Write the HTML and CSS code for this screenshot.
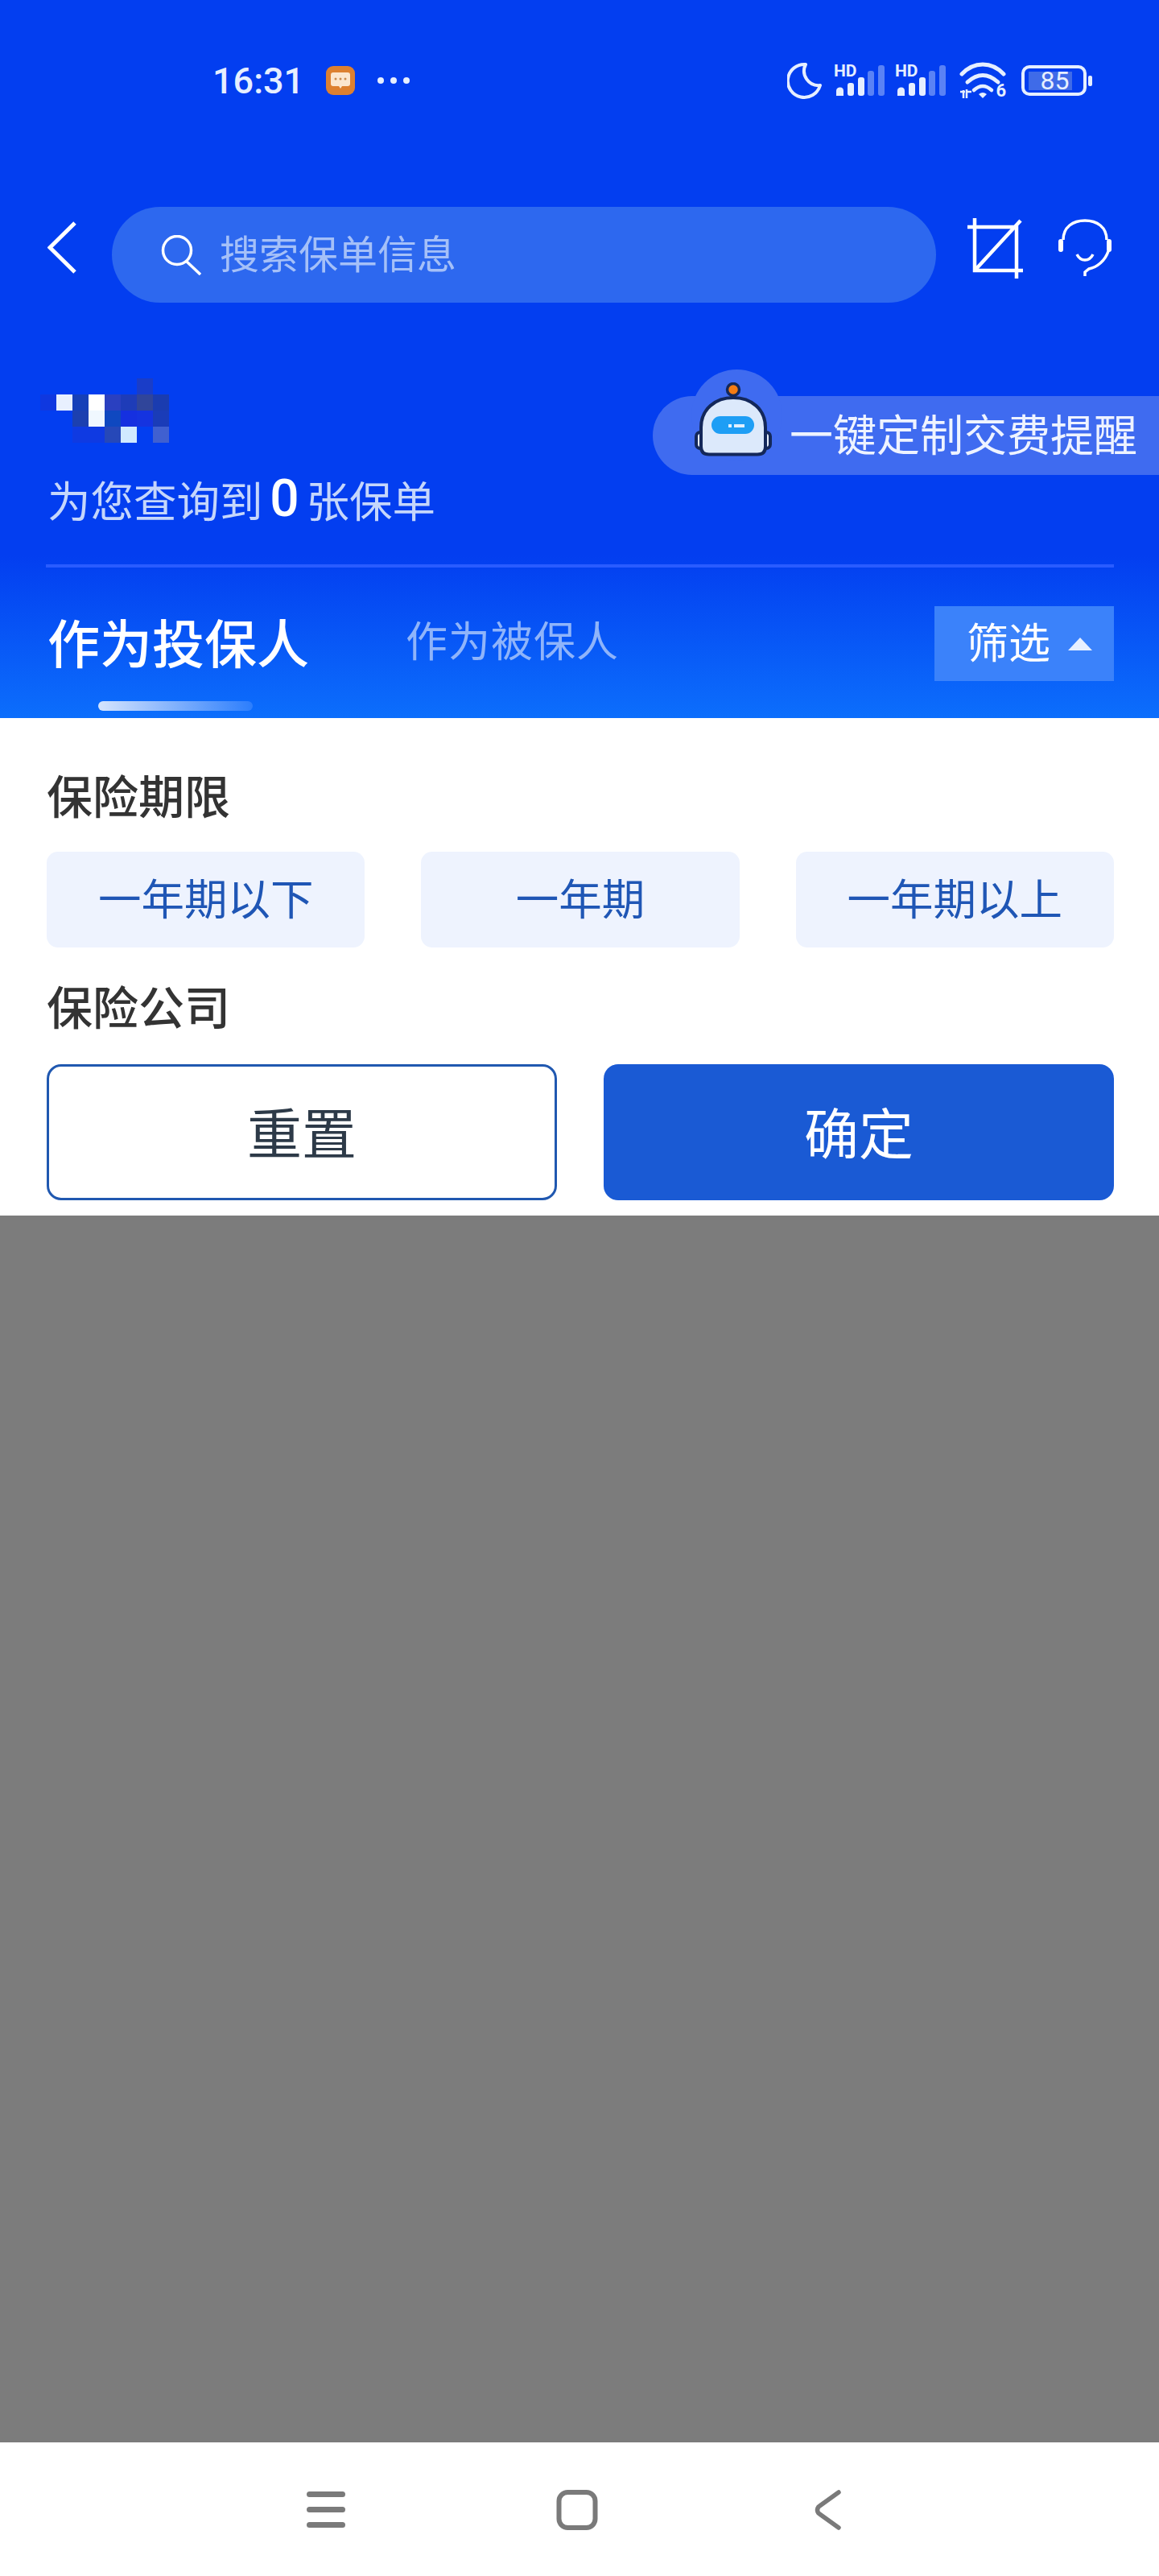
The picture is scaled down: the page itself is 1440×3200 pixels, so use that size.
FILE: index.html
```html
<!DOCTYPE html>
<html>
<head>
<title>保单查询</title>
<meta charset="utf-8">
<link rel="stylesheet" href="styles.css">
</head>
<body>

<div class="header">
    <div class="status">
        <span class="time">16:31</span>
        <svg class="notif" width="36" height="36" viewBox="0 0 36 36">
            <rect width="36" height="36" rx="9" fill="#dd8030"/>
            <path d="M9 8h18q3 0 3 3v11q0 3-3 3h-7l-2 3-2-3H9q-3 0-3-3V11q0-3 3-3z" fill="#fbe6cf"/>
            <circle cx="12" cy="16" r="1.500" fill="#c98a4e"/>
            <circle cx="18" cy="16" r="1.500" fill="#c98a4e"/>
            <circle cx="24" cy="16" r="1.500" fill="#c98a4e"/>
        </svg>
        <div class="dots"><i></i><i></i><i></i></div>
        <div class="status-right">
            <svg class="moon" width="44" height="46" viewBox="0 0 44 46">
                <path d="M23 3A20.500 20.500 0 1 0 41 29A18 18 0 0 1 23 3Z" fill="none" stroke="#e6efff" stroke-width="4" stroke-linejoin="round"/>
            </svg>
            <div class="signal sig-one">
                <span class="hd">HD</span>
                <svg width="64" height="40" viewBox="0 0 64 40">
                    <path class="bar" d="M3 39v-6q0-4 4-4.500q5-.5 5 4.500v6z"/>
                    <rect class="bar" x="17" y="23" width="8" height="16" rx="3"/>
                    <rect class="bar" x="30" y="16" width="8" height="23" rx="3"/>
                    <rect class="bar dim" x="42" y="8" width="8" height="31" rx="3"/>
                    <rect class="bar dim" x="55" y="1" width="8" height="38" rx="3"/>
                </svg>
            </div>
            <div class="signal sig-two">
                <span class="hd">HD</span>
                <svg width="64" height="40" viewBox="0 0 64 40">
                    <path class="bar" d="M3 39v-6q0-4 4-4.500q5-.5 5 4.500v6z"/>
                    <rect class="bar" x="17" y="23" width="8" height="16" rx="3"/>
                    <rect class="bar" x="30" y="16" width="8" height="23" rx="3"/>
                    <rect class="bar dim" x="42" y="8" width="8" height="31" rx="3"/>
                    <rect class="bar dim" x="55" y="1" width="8" height="38" rx="3"/>
                </svg>
            </div>
            <div class="wifi">
                <svg width="58" height="46" viewBox="0 0 58 46">
                    <g fill="none" stroke="#e6efff" stroke-linecap="round">
                        <path d="M3 15C18 -1 40 -1 55 15" stroke-width="5"/>
                        <path d="M10 25Q29 8 48 25" stroke-width="5"/>
                        <path d="M18 35Q29 25 40 35" stroke-width="4.500"/>
                    </g>
                    <path d="M24 40Q29 36 34 40L29 45Z" fill="#e6efff"/>
                    <path d="M1 37h6M5 35v10M9 45V34M10 37h5" fill="none" stroke="#e6efff" stroke-width="2.500"/>
                </svg>
                <span class="wifi-six">6</span>
            </div>
            <div class="battery">
                <div class="battery-body">
                    <span class="battery-fill"></span>
                    <span class="battery-num">85</span>
                </div>
                <i class="battery-tip"></i>
            </div>
        </div>
    </div>

    <div class="topbar">
        <svg class="back" width="36" height="65" viewBox="0 0 36 65">
            <path d="M34 2L3 32.500L34 63" fill="none" stroke="#fff" stroke-width="5"/>
        </svg>
        <div class="search">
            <svg width="50" height="50" viewBox="0 0 50 50">
                <circle cx="20" cy="19" r="17.500" fill="none" stroke="#fff" stroke-width="3.500"/>
                <path d="M31 32L49 49" stroke="#fff" stroke-width="3.500"/>
            </svg>
            <span>搜索保单信息</span>
        </div>
        <svg class="crop" width="69" height="75" viewBox="0 0 69 75">
            <path d="M0 11H61V75M9 0V65H69M66 3L9 65" fill="none" stroke="#fff" stroke-width="4.500"/>
        </svg>
        <svg class="service" width="66" height="71" viewBox="0 0 66 71">
            <g fill="none" stroke="#fff" stroke-width="3.500">
                <path d="M6 26C6 10 18 2 33 2C48 2 60 10 60 26"/>
                <path d="M62 40C58 52 48 60 38 62L33 66V71"/>
                <path d="M23 44C26 50 30 51 33 51C36 51 40 50 43 44"/>
            </g>
            <rect y="25" width="6" height="16" rx="3" fill="#fff"/>
            <rect x="60" y="25" width="6" height="16" rx="3" fill="#fff"/>
        </svg>
    </div>

    <div class="summary">
        <div class="summary-left">
            <svg class="mosaic" width="160" height="80" viewBox="0 0 160 80">
                <rect x="120" y="0" width="20" height="20" fill="#1a3dc8"/>
                <rect x="0" y="20" width="20" height="20" fill="#0f38e0"/>
                <rect x="20" y="20" width="20" height="20" fill="#e8f0fe"/>
                <rect x="40" y="20" width="20" height="20" fill="#1540b8"/>
                <rect x="60" y="20" width="20" height="20" fill="#fff"/>
                <rect x="80" y="20" width="20" height="20" fill="#2a40c0"/>
                <rect x="100" y="20" width="20" height="20" fill="#1e3cb8"/>
                <rect x="120" y="20" width="20" height="20" fill="#30459a"/>
                <rect x="140" y="20" width="20" height="20" fill="#1a3cb0"/>
                <rect x="40" y="40" width="20" height="20" fill="#1c40b0"/>
                <rect x="60" y="40" width="20" height="20" fill="#f0f8ff"/>
                <rect x="80" y="40" width="20" height="20" fill="#0f48c0"/>
                <rect x="100" y="40" width="20" height="20" fill="#1530e0"/>
                <rect x="120" y="40" width="20" height="20" fill="#1533e0"/>
                <rect x="140" y="40" width="20" height="20" fill="#1a3cb8"/>
                <rect x="40" y="60" width="40" height="20" fill="#0f3ae2"/>
                <rect x="80" y="60" width="20" height="20" fill="#2648b8"/>
                <rect x="100" y="60" width="20" height="20" fill="#d0eaff"/>
                <rect x="140" y="60" width="20" height="20" fill="#4060d0"/>
            </svg>
            <div class="count">为您查询到<b>0</b>张保单</div>
        </div>
        <div class="remind">
            <svg class="robot" width="96" height="92" viewBox="0 0 96 92">
                <path d="M48 10V28" stroke="#bcd4f5" stroke-width="3"/>
                <circle cx="48" cy="9" r="7.500" fill="#f57c14" stroke="#14285a" stroke-width="3.500"/>
                <rect x="2" y="62" width="12" height="20" rx="5" fill="#e8f1fd" stroke="#14285a" stroke-width="4"/>
                <rect x="82" y="62" width="12" height="20" rx="5" fill="#e8f1fd" stroke="#14285a" stroke-width="4"/>
                <path d="M8 80V56C8 33 26 19 48 19C70 19 88 33 88 56V80Q88 89.500 78 89.500H18Q8 89.500 8 80Z" fill="#dce9fb" stroke="#14285a" stroke-width="4"/>
                <rect x="21" y="42" width="53" height="22" rx="11" fill="#1e9ef5"/>
                <rect x="42" y="52" width="4" height="4" fill="#e0f0ff"/>
                <rect x="49" y="52" width="13" height="4" fill="#e0f0ff"/>
            </svg>
            <span>一键定制交费提醒</span>
        </div>
    </div>

    <div class="divider"></div>

    <div class="tabs">
        <div class="tab tab-active">作为投保人</div>
        <div class="tab">作为被保人</div>
        <div class="filter-btn">筛选<i class="arrow-up"></i></div>
    </div>
</div>

<div class="panel">
    <div class="panel-title">保险期限</div>
    <div class="chips">
        <div class="chip">一年期以下</div>
        <div class="chip">一年期</div>
        <div class="chip">一年期以上</div>
    </div>
    <div class="panel-title company">保险公司</div>
    <div class="actions">
        <div class="btn btn-reset">重置</div>
        <div class="btn btn-ok">确定</div>
    </div>
</div>

<div class="mask"></div>

<div class="navbar">
    <svg width="48" height="50" viewBox="0 0 48 50">
        <g fill="#7a7a7a">
            <rect y="2" width="48" height="7" rx="3.500"/>
            <rect y="21" width="48" height="7" rx="3.500"/>
            <rect y="40" width="48" height="7" rx="3.500"/>
        </g>
    </svg>
    <svg width="52" height="50" viewBox="0 0 52 50">
        <rect x="3.500" y="3" width="45" height="44" rx="11" fill="none" stroke="#7a7a7a" stroke-width="6"/>
    </svg>
    <svg width="48" height="50" viewBox="0 0 48 50">
        <path d="M37 3L12 21Q9 25 12 29L37 47" fill="none" stroke="#7a7a7a" stroke-width="5.500" stroke-linecap="round"/>
    </svg>
</div>

</body>
</html>
```

FILE: styles.css
```css
* {
    box-sizing: border-box;
}

body {
    margin: 0;
    width: 1440px;
    height: 3200px;
    overflow: hidden;
    background: #fff;
    font-family: "Noto Sans CJK SC", "Noto Sans", sans-serif;
}

.header {
    height: 892px;
    background: linear-gradient(180deg, #033ef0 0, #033ef0 690px, #0c6efc 892px);
    color: #fff;
}

/* status bar */
.status {
    height: 200px;
    padding: 0 83px 0 264px;
    display: flex;
    align-items: center;
    color: #e6efff;
}

.time {
    font-family: Roboto, sans-serif;
    font-weight: 500;
    font-size: 45px;
    line-height: 1;
    width: 108px;
}

.notif {
    margin-left: 33px;
}

.dots {
    margin-left: 28px;
    display: flex;
    gap: 8px;
}

.dots i {
    width: 8px;
    height: 8px;
    border-radius: 50%;
    background: #e6efff;
}

.status-right {
    margin-left: auto;
    display: flex;
    align-items: center;
}

.signal {
    position: relative;
    width: 64px;
    height: 40px;
}

.signal svg {
    display: block;
}

.sig-one {
    margin-left: 14px;
}

.sig-two {
    margin-left: 12px;
}

.hd {
    position: absolute;
    left: 0;
    top: -2px;
    font-family: Roboto, sans-serif;
    font-weight: 700;
    font-size: 21px;
    line-height: 20px;
}

.bar {
    fill: #e6efff;
}

.bar.dim {
    fill: #5a82f5;
}

.wifi {
    position: relative;
    margin-left: 16px;
    width: 58px;
    height: 46px;
}

.wifi svg {
    display: block;
}

.wifi-six {
    position: absolute;
    right: 0;
    bottom: -1px;
    font-family: Roboto, sans-serif;
    font-weight: 700;
    font-size: 22px;
    line-height: 22px;
}

.battery {
    margin-left: 19px;
    display: flex;
    align-items: center;
    gap: 2px;
}

.battery-body {
    position: relative;
    width: 81px;
    height: 38px;
    border: 4px solid #e6efff;
    border-radius: 10px;
    display: flex;
    align-items: center;
    justify-content: center;
}

.battery-fill {
    position: absolute;
    left: 5px;
    top: 4px;
    width: 54px;
    height: 23px;
    background: #3f6be8;
}

.battery-num {
    position: relative;
    padding-left: 2px;
    font-family: Roboto, sans-serif;
    font-size: 32px;
    line-height: 1;
}

.battery-tip {
    width: 5px;
    height: 13px;
    border-radius: 2px;
    background: #e6efff;
}

/* back, search and the two icons */
.topbar {
    margin-top: 57px;
    height: 119px;
    padding: 0 59px 0 59px;
    display: flex;
    align-items: flex-start;
}

.back {
    margin-top: 18px;
}

.search {
    margin-left: 44px;
    width: 1024px;
    height: 119px;
    border-radius: 60px;
    background: #2d68ef;
    padding-left: 61px;
    display: flex;
    align-items: center;
    gap: 23px;
    font-size: 49px;
    color: #a5c0f8;
}

.search span {
    padding-bottom: 8px;
}

.crop {
    margin: 14px 0 0 39px;
}

.service {
    margin: 15px 0 0 44px;
}

/* name, count and reminder banner */
.summary {
    margin-top: 83px;
    height: 201px;
    padding-left: 50px;
    display: flex;
    justify-content: space-between;
}

.mosaic {
    display: block;
    margin-top: 11px;
}

.count {
    margin-top: 34px;
    margin-left: 9px;
    font-size: 53.500px;
    line-height: 72px;
    color: #c5d6fb;
    display: flex;
    align-items: center;
}

.count b {
    font-family: Roboto, sans-serif;
    font-weight: 500;
    font-size: 64px;
    color: #fff;
    width: 54px;
    text-align: center;
}

.remind {
    position: relative;
    margin-top: 33px;
    width: 629px;
    height: 98px;
    border-radius: 49px 0 0 49px;
    background: #3f6bf0;
    padding-left: 52px;
    display: flex;
    align-items: center;
    font-size: 54px;
    color: #eef3ff;
}

.remind::before {
    content: "";
    position: absolute;
    left: 48px;
    top: -33px;
    width: 113px;
    height: 113px;
    border-radius: 50%;
    background: #3f6bf0;
}

.robot {
    position: relative;
    align-self: flex-start;
    margin-top: -17px;
}

.remind span {
    position: relative;
    margin-left: 22px;
    padding-bottom: 8px;
    white-space: nowrap;
}

.divider {
    margin: 41px 56px 0 57px;
    height: 4px;
    background: #2a5cff;
}

/* tabs */
.tabs {
    margin-top: 48px;
    height: 93px;
    padding: 0 56px 0 59px;
    display: flex;
    align-items: center;
}

.tab {
    font-size: 52px;
    line-height: 72px;
    letter-spacing: 1px;
    color: #8fb4fa;
    margin-bottom: 12px;
}

.tab-active {
    position: relative;
    width: 445px;
    font-size: 65px;
    letter-spacing: 0;
    font-weight: 500;
    color: #fff;
    margin-bottom: 8px;
}

.tab-active::after {
    content: "";
    position: absolute;
    left: 63px;
    top: 111px;
    width: 192px;
    height: 12px;
    border-radius: 6px;
    background: linear-gradient(90deg, #d5e4fd, rgba(120, 170, 255, 0.3));
}

.filter-btn {
    margin-left: auto;
    width: 223px;
    height: 93px;
    background: #3b82fa;
    padding: 0 0 8px 40px;
    display: flex;
    align-items: center;
    gap: 22px;
    font-size: 52px;
    color: #fff;
}

.arrow-up {
    margin-top: 8px;
    width: 0;
    height: 0;
    border-left: 15px solid transparent;
    border-right: 15px solid transparent;
    border-bottom: 16px solid #e8f0ff;
}

/* filter panel */
.panel {
    height: 618px;
    padding: 58px 56px 0 58px;
}

.panel-title {
    font-size: 57px;
    line-height: 72px;
    font-weight: 500;
    color: #333;
}

.chips {
    margin-top: 36px;
    display: grid;
    grid-template-columns: repeat(3, 1fr);
    gap: 70px;
}

.chip {
    height: 119px;
    padding-bottom: 8px;
    border-radius: 14px;
    background: #eef3fe;
    color: #1f56b5;
    font-size: 53.500px;
    display: flex;
    align-items: center;
    justify-content: center;
}

.company {
    margin-top: 35px;
}

.actions {
    margin-top: 38px;
    display: grid;
    grid-template-columns: 1fr 1fr;
    gap: 58px;
}

.btn {
    height: 169px;
    padding-bottom: 4px;
    border-radius: 18px;
    font-size: 68px;
    display: flex;
    align-items: center;
    justify-content: center;
}

.btn-reset {
    border: 3px solid #2058b0;
    color: #2d3a48;
}

.btn-ok {
    background: #1a5ad4;
    color: #fff;
}

.mask {
    height: 1524px;
    background: #7c7c7c;
}

.navbar {
    height: 166px;
    padding: 59px 0 0 381px;
    display: flex;
    align-items: flex-start;
    gap: 262px;
}
```
